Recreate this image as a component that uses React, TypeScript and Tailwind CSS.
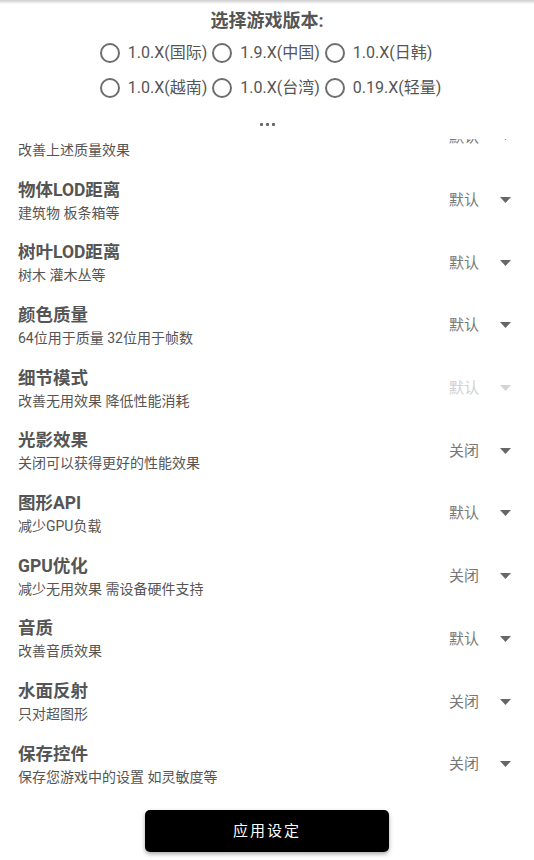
import React from "react";

type Setting = {
  title: string;
  desc: string;
  value: string;
  disabled?: boolean;
};

const versions = [
  ["1.0.X(国际)", "1.9.X(中国)", "1.0.X(日韩)"],
  ["1.0.X(越南)", "1.0.X(台湾)", "0.19.X(轻量)"],
];

const settings: Setting[] = [
  { title: "抗锯齿", desc: "改善上述质量效果", value: "默认" },
  { title: "物体LOD距离", desc: "建筑物 板条箱等", value: "默认" },
  { title: "树叶LOD距离", desc: "树木 灌木丛等", value: "默认" },
  { title: "颜色质量", desc: "64位用于质量 32位用于帧数", value: "默认" },
  { title: "细节模式", desc: "改善无用效果 降低性能消耗", value: "默认", disabled: true },
  { title: "光影效果", desc: "关闭可以获得更好的性能效果", value: "关闭" },
  { title: "图形API", desc: "减少GPU负载", value: "默认" },
  { title: "GPU优化", desc: "减少无用效果 需设备硬件支持", value: "关闭" },
  { title: "音质", desc: "改善音质效果", value: "默认" },
  { title: "水面反射", desc: "只对超图形", value: "关闭" },
  { title: "保存控件", desc: "保存您游戏中的设置 如灵敏度等", value: "关闭" },
];

function Radio({ label }: { label: string }) {
  return (
    <div className="flex items-center gap-[8px]">
      <div className="w-[20px] h-[20px] rounded-full border-2 border-[#6e6e6e]" />
      <span className="text-[16px] leading-[20px] text-[#555]">{label}</span>
    </div>
  );
}

function Caret({ light }: { light?: boolean }) {
  return (
    <svg width="11" height="6" viewBox="0 0 11 6">
      <path d="M0 0 L11 0 L5.5 6 Z" fill={light ? "#d4d4d4" : "#666"} />
    </svg>
  );
}

function Row({ s }: { s: Setting }) {
  return (
    <div className="h-[62.7px] flex items-center pl-[18px] pr-[23px]">
      <div className="flex-1 min-w-0">
        <div className="text-[17.5px] leading-[24px] font-bold text-[#555]">{s.title}</div>
        <div className="mt-[1px] text-[14px] leading-[20px] text-[#555]">{s.desc}</div>
      </div>
      <div className="flex items-center gap-[21px]">
        <span className={`text-[15px] leading-[20px] ${s.disabled ? "text-[#d0d0d0]" : "text-[#777]"}`}>
          {s.value}
        </span>
        <Caret light={s.disabled} />
      </div>
    </div>
  );
}

export default function App() {
  return (
    <div className="relative w-[534px] h-[860px] bg-white overflow-hidden font-[Roboto,'Noto_Sans_CJK_SC',sans-serif]">
      {/* toolbar shadow */}
      <div className="absolute top-0 left-0 right-0 h-[4px] bg-gradient-to-b from-black/20 to-transparent" />

      <div className="pt-[9px] text-center text-[18px] leading-[24px] font-bold text-[#555]">选择游戏版本:</div>

      <div className="mt-[2.5px] flex justify-center pl-[7px]">
        <div className="flex flex-col">
          {versions.map((row, i) => (
            <div key={i} className="h-[35px] flex items-center gap-[5px]">
              {row.map((v) => (
                <Radio key={v} label={v} />
              ))}
            </div>
          ))}
        </div>
      </div>

      {/* more indicator */}
      <div className="mt-[17.5px] flex justify-center gap-[3px]">
        <span className="w-[3px] h-[3px] rounded-[1px] bg-[#666]" />
        <span className="w-[3px] h-[3px] rounded-[1px] bg-[#666]" />
        <span className="w-[3px] h-[3px] rounded-[1px] bg-[#666]" />
      </div>

      <div className="mt-[13px] h-[656px] overflow-hidden">
        <div className="-mt-[33px]">
          {settings.map((s) => (
            <Row key={s.title} s={s} />
          ))}
        </div>
      </div>

      <div className="mt-[15px] flex justify-center">
        <button className="w-[244px] h-[42px] rounded-[5px] bg-black text-white text-[15px] tracking-[2px] shadow-[0_2px_4px_rgba(0,0,0,0.35)]">
          应用设定
        </button>
      </div>
    </div>
  );
}
